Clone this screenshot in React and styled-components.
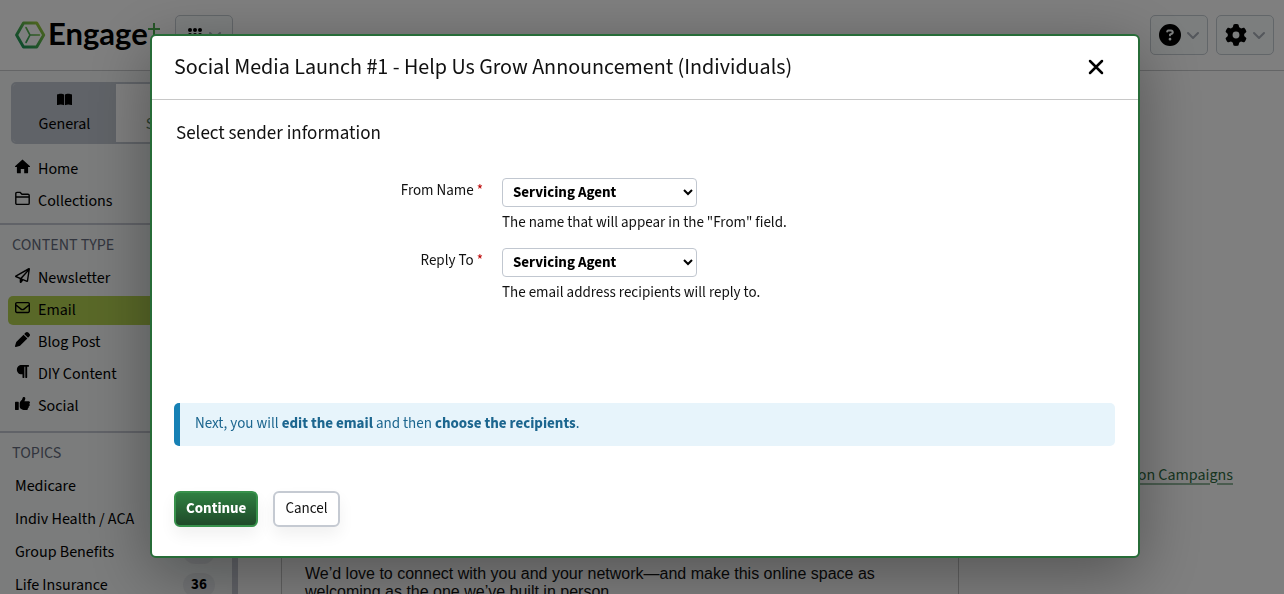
import styled, { createGlobalStyle } from 'styled-components'
import {
  FaBookOpen,
  FaCircleQuestion,
  FaGear,
  FaParagraph,
  FaPen,
  FaRegEnvelope,
  FaRegPaperPlane,
  FaThumbsUp,
  FaUsers,
} from 'react-icons/fa6'

const HomeIcon = () => (
  <svg width="15" height="15" viewBox="0 0 15 15" fill="currentColor">
    <path d="M7.5.6L0 7.3c-.2.5.1.8.5.8h1.4v5.3c0 .6.3.9.9.9h3V10h3.4v4.3h3c.6 0 .9-.3.9-.9V8.1h1.4c.4 0 .7-.3.5-.8z" />
  </svg>
)

const FolderIcon = () => (
  <svg width="15" height="15" viewBox="0 0 15 15" fill="none" stroke="currentColor">
    <path
      d="M.8 12.2V2.6C.8 1.8 1.2 1.4 2 1.4h3.2L7 3.2h6c.8 0 1.2.4 1.2 1.2v7.8c0 .8-.4 1.2-1.2 1.2H2c-.8 0-1.2-.4-1.2-1.2zM.8 6h13.4"
      strokeWidth="1.4"
    />
  </svg>
)

const mainLinks = [
  { id: 1, name: 'Home', icon: HomeIcon },
  { id: 2, name: 'Collections', icon: FolderIcon },
]

const contentTypes = [
  { id: 1, name: 'Newsletter', icon: FaRegPaperPlane },
  { id: 2, name: 'Email', icon: FaRegEnvelope, active: true },
  { id: 3, name: 'Blog Post', icon: FaPen },
  { id: 4, name: 'DIY Content', icon: FaParagraph },
  { id: 5, name: 'Social', icon: FaThumbsUp },
]

const topics = [
  { id: 1, name: 'Medicare', count: 84 },
  { id: 2, name: 'Indiv Health / ACA', count: 52 },
  { id: 3, name: 'Group Benefits', count: 47 },
  { id: 4, name: 'Life Insurance', count: 36 },
]

const fields = [
  {
    id: 'from-name',
    label: 'From Name',
    help: 'The name that will appear in the "From" field.',
  },
  {
    id: 'reply-to',
    label: 'Reply To',
    help: 'The email address recipients will reply to.',
  },
]

const GlobalStyle = createGlobalStyle`
  * {
    box-sizing: border-box;
  }
  body {
    margin: 0;
    background: #fff;
    color: #111;
    font-family: 'Source Sans 3', 'Noto Sans CJK SC', 'Liberation Sans', sans-serif;
    font-size: 16px;
    line-height: 20px;
  }
  button,
  select {
    font: inherit;
    color: inherit;
  }
  h1,
  h2,
  h3,
  p,
  ul {
    margin: 0;
    padding: 0;
    font-weight: normal;
  }
  ul {
    list-style: none;
  }
`

const Page = styled.div`
  height: 100vh;
  display: flex;
  flex-direction: column;
  overflow: hidden;
`

const Header = styled.header`
  flex: none;
  display: flex;
  align-items: flex-start;
  gap: 8px;
  padding: 15px 10px;
  border-bottom: 1px solid #c8cacc;
`

const Logo = styled.a`
  display: flex;
  align-items: center;
  height: 40px;
  width: 157px;
  padding-left: 5px;
  color: #000;
  text-decoration: none;
`

const LogoText = styled.span`
  margin-left: 2px;
  padding-bottom: 4px;
  font-family: Lato, sans-serif;
  font-weight: 700;
  font-size: 31px;
  line-height: 36px;
`

const HeaderButton = styled.button`
  display: flex;
  align-items: center;
  justify-content: center;
  gap: 6px;
  width: 58px;
  height: 40px;
  padding: 0;
  margin-left: ${({ $push }) => ($push ? 'auto' : '0')};
  background: #f8fcfc;
  border: 1px solid #c5ccd2;
  border-radius: 5px;
  color: #000;
`

const Columns = styled.div`
  flex: 1;
  min-height: 0;
  display: flex;
`

const Sidebar = styled.nav`
  flex: none;
  width: 238px;
  background: #f6f9f9;
  border-right: 6px solid #c3c6d0;
  overflow: hidden;
`

const Tabs = styled.div`
  display: flex;
  margin: 11px 11px;
  border: 2px solid #c1c7d0;
  border-radius: 5px;
  overflow: hidden;
`

const Tab = styled.button`
  flex: 1;
  display: flex;
  flex-direction: column;
  align-items: center;
  gap: 7px;
  height: 58px;
  padding: 8px 0 0;
  border: 0;
  background: ${({ $active }) => ($active ? '#c1c7d0' : '#fff')};
  color: ${({ $active }) => ($active ? '#000' : '#4f7a5c')};
`

const NavGroup = styled.div`
  padding-bottom: ${({ $tight }) => ($tight ? '4px' : '7px')};
  margin-bottom: 8px;
  border-bottom: 2px solid #c3c6d0;
`

const NavTitle = styled.h3`
  padding-left: 12px;
  margin-bottom: 7px;
  font-size: 16px;
  line-height: 24px;
  color: #656b7c;
`

const NavItem = styled.a`
  display: flex;
  align-items: center;
  gap: 8px;
  height: 29px;
  margin: 0 8px 3px;
  padding: 0 7px 2px;
  border-radius: 5px;
  background: ${({ $active }) => ($active ? '#b3d150' : 'transparent')};
  color: #000;
  text-decoration: none;

  svg {
    flex: none;
    margin-bottom: 4px;
  }
`

const TopicList = styled.ul`
  padding-top: 2px;
`

const TopicItem = styled.a`
  display: flex;
  align-items: center;
  justify-content: space-between;
  height: 24px;
  margin-bottom: 9px;
  padding: 0 17px 0 15px;
  color: #000;
  text-decoration: none;
`

const Badge = styled.span`
  width: 32px;
  border-radius: 12px;
  background: #e6e9ec;
  font-size: 15px;
  font-weight: 700;
  line-height: 24px;
  text-align: center;
`

const Main = styled.main`
  flex: 1;
  display: flex;
  align-items: stretch;
  padding-left: 43px;
  padding-right: 51px;
`

const Preview = styled.article`
  flex: none;
  width: 678px;
  display: flex;
  flex-direction: column;
  justify-content: flex-end;
  padding: 0 64px 0 23px;
  border: solid #c4c4c4;
  border-width: 0 1px;
  font-family: 'Liberation Sans', Arial, sans-serif;
  font-size: 16px;
  line-height: 18px;

  p {
    margin-bottom: -7px;
  }
`

const Related = styled.aside`
  flex: 1;
  display: flex;
  justify-content: flex-end;
  align-items: flex-end;
  padding-bottom: 109px;
  white-space: nowrap;

  a {
    color: #2d6a40;
    text-decoration-color: #94b99f;
    text-decoration-thickness: 2px;
    text-underline-offset: 3px;
  }
`

const Overlay = styled.div`
  position: fixed;
  inset: 0;
  padding: 34px 144px 0 150px;
  background: rgba(0, 0, 0, 0.5);
`

const Dialog = styled.section`
  background: #fff;
  border: 2px solid #276c38;
  border-radius: 6px;
  box-shadow: 0 16px 64px rgba(0, 0, 0, 0.35);
`

const DialogHeader = styled.header`
  display: flex;
  align-items: center;
  justify-content: space-between;
  height: 64px;
  padding: 0 34px 2px 22px;
  border-bottom: 1px solid #c8c8c8;
`

const DialogTitle = styled.h1`
  font-size: 22px;
  line-height: 28px;
`

const CloseButton = styled.button`
  display: flex;
  padding: 0;
  border: 0;
  background: none;
  color: #000;
`

const DialogBody = styled.form`
  padding: 22px 23px 29px 22px;
`

const SectionTitle = styled.h2`
  padding-left: 2px;
  margin-bottom: 32px;
  font-size: 19px;
  line-height: 24px;
`

const Field = styled.div`
  display: grid;
  grid-template-columns: 309px 1fr;
  column-gap: 19px;
  margin-bottom: 15px;
  font-size: 15px;
`

const Label = styled.label`
  padding-top: 3px;
  text-align: right;

  span {
    color: #b00;
  }
`

const Select = styled.select`
  display: block;
  width: 195px;
  height: 29px;
  margin-bottom: 6px;
  padding: 0 0 0 6px;
  background: #fff;
  border: 1px solid #c1c7d0;
  border-radius: 4px;
  color: #000;
  font-weight: 700;
`

const Notice = styled.p`
  margin: 100px 0 45px;
  padding: 11px 15px 12px;
  border-left: 6px solid #1781b5;
  border-radius: 5px;
  background: #e7f4fb;
  color: #1c668f;
  font-size: 15px;
`

const Actions = styled.div`
  display: flex;
  gap: 15px;
`

const Button = styled.button`
  height: 36px;
  padding: 0 10px;
  border: 2px solid ${({ $primary }) => ($primary ? '#37914b' : '#c5cad2')};
  border-radius: 6px;
  background: ${({ $primary }) =>
    $primary ? 'linear-gradient(#2f7f41, #1f4a29)' : '#fff'};
  box-shadow: 0 8px 16px rgba(0, 0, 0, 0.06);
  color: ${({ $primary }) => ($primary ? '#fff' : '#111')};
  font-size: 15px;
  font-weight: ${({ $primary }) => ($primary ? 700 : 400)};
`

const LogoMark = () => (
  <svg width="31" height="28" viewBox="0 0 31 28" fill="none">
    <defs>
      <linearGradient id="mark" x1="4" y1="26" x2="26" y2="2" gradientUnits="userSpaceOnUse">
        <stop stopColor="#14925a" />
        <stop offset="0.5" stopColor="#4cae50" />
        <stop offset="1" stopColor="#a5cc3c" />
      </linearGradient>
    </defs>
    <path
      d="M8.5 2h13.2L28.7 14l-7 12H8.5L1.6 14z"
      stroke="url(#mark)"
      strokeWidth="3"
      strokeLinejoin="round"
    />
    <path
      d="M11 6.5L15 14l-4 7.5M15 14h9.5"
      stroke="url(#mark)"
      strokeWidth="1.6"
      strokeLinecap="round"
    />
  </svg>
)

const LogoPlus = () => (
  <svg width="12" height="32" viewBox="0 0 12 32" stroke="#4cae50" strokeWidth="2">
    <path d="M6 4v12M0 10h12" />
  </svg>
)

const Dots = () => (
  <svg width="16" height="16" viewBox="0 0 16 16">
    {[3, 8, 13].map(y =>
      [3, 8, 13].map(x => <circle key={`${x}-${y}`} cx={x} cy={y} r="2" />)
    )}
  </svg>
)

const Chevron = () => (
  <svg width="12" height="10" viewBox="0 0 12 10" fill="none" stroke="#a9afb8" strokeWidth="2">
    <path d="M1 3l5 5 5-5" strokeLinecap="round" strokeLinejoin="round" />
  </svg>
)

const CloseIcon = () => (
  <svg width="16" height="16" viewBox="0 0 16 16" fill="none" stroke="currentColor">
    <path d="M2 2l12 12M14 2L2 14" strokeWidth="2.5" strokeLinecap="round" />
  </svg>
)

const NavLink = ({ link }) => {
  const Icon = link.icon
  return (
    <li>
      <NavItem href="#" $active={link.active}>
        <Icon size={15} />
        {link.name}
      </NavItem>
    </li>
  )
}

const SideBar = () => {
  return (
    <Sidebar>
      <Tabs>
        <Tab type="button" $active>
          <FaBookOpen size={15} />
          General
        </Tab>
        <Tab type="button">
          <FaUsers size={15} />
          Senior
        </Tab>
      </Tabs>
      <NavGroup $tight>
        <ul>
          {mainLinks.map(link => (
            <NavLink key={link.id} link={link} />
          ))}
        </ul>
      </NavGroup>
      <NavGroup>
        <NavTitle>CONTENT TYPE</NavTitle>
        <ul>
          {contentTypes.map(link => (
            <NavLink key={link.id} link={link} />
          ))}
        </ul>
      </NavGroup>
      <NavTitle>TOPICS</NavTitle>
      <TopicList>
        {topics.map(topic => (
          <li key={topic.id}>
            <TopicItem href="#">
              {topic.name}
              <Badge>{topic.count}</Badge>
            </TopicItem>
          </li>
        ))}
      </TopicList>
    </Sidebar>
  )
}

const SenderDialog = () => {
  return (
    <Overlay>
      <Dialog role="dialog" aria-modal="true" aria-labelledby="dialog-title">
        <DialogHeader>
          <DialogTitle id="dialog-title">
            Social Media Launch #1 - Help Us Grow Announcement (Individuals)
          </DialogTitle>
          <CloseButton type="button" aria-label="Close">
            <CloseIcon />
          </CloseButton>
        </DialogHeader>
        <DialogBody onSubmit={e => e.preventDefault()}>
          <SectionTitle>Select sender information</SectionTitle>
          {fields.map(field => (
            <Field key={field.id}>
              <Label htmlFor={field.id}>
                {field.label} <span>*</span>
              </Label>
              <div>
                <Select id={field.id}>
                  <option>Servicing Agent</option>
                </Select>
                <p>{field.help}</p>
              </div>
            </Field>
          ))}
          <Notice>
            Next, you will <b>edit the email</b> and then <b>choose the recipients</b>.
          </Notice>
          <Actions>
            <Button type="submit" $primary>
              Continue
            </Button>
            <Button type="button">Cancel</Button>
          </Actions>
        </DialogBody>
      </Dialog>
    </Overlay>
  )
}

const App = () => {
  return (
    <>
      <GlobalStyle />
      <Page>
        <Header>
          <Logo href="#">
            <LogoMark />
            <LogoText>Engage</LogoText>
            <LogoPlus />
          </Logo>
          <HeaderButton type="button" aria-label="Apps">
            <Dots />
            <Chevron />
          </HeaderButton>
          <HeaderButton type="button" aria-label="Help" $push>
            <FaCircleQuestion size={22} />
            <Chevron />
          </HeaderButton>
          <HeaderButton type="button" aria-label="Settings">
            <FaGear size={22} />
            <Chevron />
          </HeaderButton>
        </Header>
        <Columns>
          <SideBar />
          <Main>
            <Preview>
              <p>
                We’d love to connect with you and your network—and make this online space as
                welcoming as the one we’ve built in person.
              </p>
            </Preview>
            <Related>
              <a href="#">Automation Campaigns</a>
            </Related>
          </Main>
        </Columns>
      </Page>
      <SenderDialog />
    </>
  )
}

export default App
